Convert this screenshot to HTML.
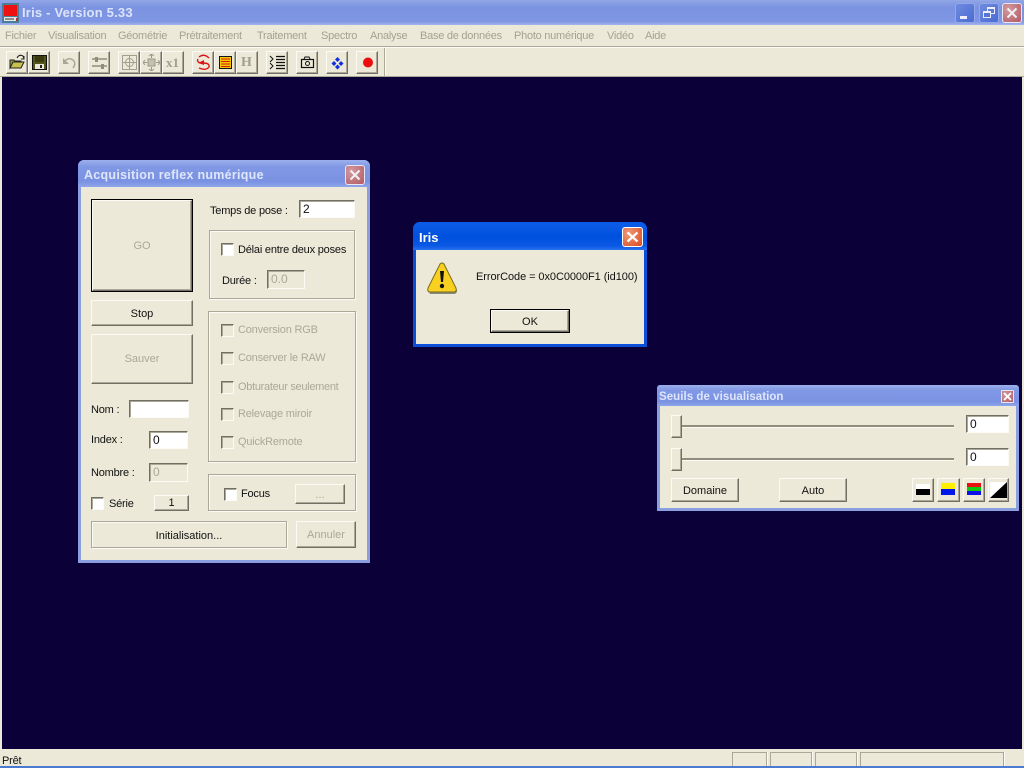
<!DOCTYPE html>
<html><head><meta charset="utf-8"><title>Iris</title>
<style>
html,body{margin:0;padding:0;width:1024px;height:768px;overflow:hidden;background:#0b0038}
*{box-sizing:border-box}
body{position:relative;font:11px/14px "Liberation Sans",sans-serif;color:#111}
div,svg,span.a{position:absolute}
.t{white-space:nowrap;line-height:14px;margin-top:1px;letter-spacing:-.2px}
.d{color:#aca899}
.btn{background:#ece9d8;border:1px solid;border-color:#fbfaf5 #716f64 #716f64 #fbfaf5;box-shadow:inset -1px -1px 0 #aca899;text-align:center;white-space:nowrap;padding-top:1px}
.ed{background:#fff;border:1px solid;border-color:#716f64 #fbfaf5 #fbfaf5 #716f64;padding:1px 0 0 3px;line-height:15px;box-shadow:inset 1px 1px 0 #aca899;font-size:12px}
.ed.dis{background:#ece9d8;color:#aca899}
.grp{border:1px solid #aca899;box-shadow:inset 1px 1px 0 #fbfaf5,1px 1px 0 #fbfaf5}
.ck{width:13px;height:13px;background:#fff;border:1px solid;border-color:#716f64 #fbfaf5 #fbfaf5 #716f64;box-shadow:inset 1px 1px 0 #aca899}
.ck.dis{background:#ece9d8}
.tb{width:22px;height:23px;top:51px;background:#ece9d8;border:1px solid;border-color:#fbfaf5 #716f64 #716f64 #fbfaf5;box-shadow:inset -1px -1px 0 #aca899}
.tb svg{left:2px;top:2px}
.win{background:#ece9d8;border:3px solid #8a9fe0;border-top:0;border-radius:6px 6px 0 0}
.cap{background:linear-gradient(#9db0ec,#8098e4 25%,#7a92e2 80%,#90a6ea);border-radius:6px 6px 0 0;color:#dfe6fa;font-weight:bold;white-space:nowrap}
.x{border-radius:3px;border:1px solid #e8e8f4;background:radial-gradient(circle at 30% 30%,#d29a9e,#b25a64)}
.m{top:28px;color:#a5a293;white-space:nowrap;line-height:14px;margin-top:1px;letter-spacing:-.25px}
</style></head><body>

<!-- desktop edges -->
<div style="left:0;top:77px;width:2px;height:672px;background:#ece9d8"></div>
<div style="left:1022px;top:77px;width:2px;height:672px;background:#ece9d8"></div>

<!-- main title bar -->
<div style="left:0;top:0;width:1024px;height:25px;background:linear-gradient(#90a6e6,#7b93e2 30%,#7e96e3 85%,#a2b4ee)"></div>
<svg style="left:2px;top:3px" width="18" height="20" viewBox="0 0 18 20"><rect x="0" y="0" width="17" height="20" fill="#4a7f9a"/><rect x="2" y="2" width="13" height="11" fill="#ee1111"/><rect x="2" y="14" width="13" height="4" fill="#e6e6e6"/><rect x="3" y="15.500" width="9" height="1" fill="#333"/><rect x="14" y="15" width="2" height="3" fill="#b03030"/></svg>
<div style="left:22px;top:5px;white-space:nowrap;font:bold 13px/16px 'Liberation Sans',sans-serif;letter-spacing:.2px;color:#dce4fa">Iris - Version 5.33</div>
<div style="left:955px;top:3px;width:20px;height:20px;border-radius:3px;background:linear-gradient(135deg,#6f8ce0,#4a6ad2);border:1px solid #94a8e8"><div style="left:4px;top:12px;width:7px;height:3px;background:#eef"></div></div>
<div style="left:979px;top:3px;width:20px;height:20px;border-radius:3px;background:linear-gradient(135deg,#6f8ce0,#4a6ad2);border:1px solid #94a8e8"><div style="left:7px;top:3px;width:8px;height:7px;border:1px solid #eef;border-top-width:2px"></div><div style="left:3px;top:7px;width:8px;height:7px;border:1px solid #eef;border-top-width:2px;background:#5476da"></div></div>
<div class="x" style="left:1002px;top:3px;width:20px;height:20px"><svg style="left:3px;top:3px" width="12" height="12"><path d="M1.500 1.500L10.500 10.500M10.500 1.500L1.500 10.500" stroke="#f2f2f6" stroke-width="2"/></svg></div>

<!-- menu -->
<div style="left:0;top:25px;width:1024px;height:21px;background:#ece9d8"></div>
<div class="m" style="left:5px">Fichier</div>
<div class="m" style="left:48px">Visualisation</div>
<div class="m" style="left:118px">Géométrie</div>
<div class="m" style="left:179px">Prétraitement</div>
<div class="m" style="left:257px">Traitement</div>
<div class="m" style="left:321px">Spectro</div>
<div class="m" style="left:370px">Analyse</div>
<div class="m" style="left:420px">Base de données</div>
<div class="m" style="left:514px">Photo numérique</div>
<div class="m" style="left:607px">Vidéo</div>
<div class="m" style="left:645px">Aide</div>

<!-- toolbar -->
<div style="left:0;top:46px;width:1024px;height:31px;background:#ece9d8;border-top:1px solid #aca899;box-shadow:inset 0 1px 0 #fbfaf5;border-bottom:1px solid #aca899"></div>
<div style="left:384px;top:48px;width:2px;height:28px;background:#aca899;border-right:1px solid #fbfaf5"></div>
<div class="tb" style="left:6px"><svg width="17" height="17" viewBox="0 0 17 17"><path d="M1 14V6h4l1 1h6v2H4L1 14z" fill="#9a9a30" stroke="#222"/><path d="M1 14h11l3-6H4z" fill="#c8c050" stroke="#222"/><path d="M8 4Q10 0 14 2l1 3M15 2v3h-3" fill="none" stroke="#222"/></svg></div>
<div class="tb" style="left:28px"><svg width="17" height="17" viewBox="0 0 17 17"><rect x="1.500" y="1.500" width="14" height="14" fill="#55551a" stroke="#111"/><rect x="4" y="2" width="9" height="6" fill="#3a3a10"/><rect x="4" y="10" width="9" height="5" fill="#e8e8d8"/><rect x="9" y="11" width="2" height="3" fill="#222"/></svg></div>
<div class="tb" style="left:58px"><svg width="17" height="17" viewBox="0 0 17 17"><path d="M3 8Q8 2 13 7Q15 10 12 14" fill="none" stroke="#aca899" stroke-width="1.500"/><path d="M2 4v6h6z" fill="#aca899"/></svg></div>
<div class="tb" style="left:88px"><svg width="17" height="17" viewBox="0 0 17 17"><path d="M1 5h15M1 12h15" stroke="#8f8d80" stroke-width="1.500"/><rect x="4" y="3" width="3" height="5" fill="#8f8d80"/><rect x="10" y="10" width="3" height="5" fill="#8f8d80"/></svg></div>
<div class="tb" style="left:118px"><svg width="17" height="17" viewBox="0 0 17 17"><rect x="1.500" y="1.500" width="14" height="14" fill="none" stroke="#a29f90"/><circle cx="8.500" cy="8.500" r="4" fill="none" stroke="#a29f90"/><path d="M8.500 2v13M2 8.500h13" stroke="#a29f90"/></svg></div>
<div class="tb" style="left:140px"><svg width="17" height="17" viewBox="0 0 17 17"><rect x="5" y="5" width="7" height="7" fill="#c4c1b0" stroke="#99968a"/><path d="M8.500 0v4M8.500 13v4M0 8.500h4M13 8.500h4M6 2l2.500-2 2.500 2M6 15l2.500 2 2.500-2M2 6L0 8.500 2 11M15 6l2 2.500-2 2.500" fill="none" stroke="#99968a"/></svg></div>
<div class="tb" style="left:162px"><div style="left:3px;top:3px;white-space:nowrap;font:bold 13px/15px 'Liberation Serif',serif;color:#a29f90">x1</div></div>
<div class="tb" style="left:192px"><svg width="17" height="17" viewBox="0 0 17 17"><path d="M14 4Q9-1 4 3M3 5Q1 9 8 9t6 4Q11 17 4 14" fill="none" stroke="#dc1414" stroke-width="1.400"/><path d="M3 9l6-3v5z" fill="#dc1414"/></svg></div>
<div class="tb" style="left:214px"><svg width="17" height="17" viewBox="0 0 17 17"><rect x="2.500" y="2.500" width="12" height="12" fill="#f5c800" stroke="#111"/><path d="M4 5h9M4 7.500h9M4 10h9M4 12.500h9" stroke="#d21a10"/></svg></div>
<div class="tb" style="left:236px"><div style="left:4px;top:3px;white-space:nowrap;font:bold 14px/15px 'Liberation Serif',serif;color:#a29f90">H</div></div>
<div class="tb" style="left:266px"><svg width="17" height="17" viewBox="0 0 17 17"><path d="M7 2.500h9M7 5.500h9M7 8.500h9M7 11.500h9M7 14.500h9" stroke="#111" stroke-width="1.300"/><path d="M1 2l3 3-3 3M1 9l3 3-3 3" fill="none" stroke="#111"/></svg></div>
<div class="tb" style="left:296px"><svg width="17" height="17" viewBox="0 0 17 17"><rect x="2.500" y="5.500" width="12" height="8" fill="none" stroke="#111" stroke-width="1.200"/><path d="M5 5l1-2h4l1 2" fill="none" stroke="#111"/><circle cx="8.500" cy="9.500" r="2" fill="none" stroke="#111"/></svg></div>
<div class="tb" style="left:326px"><svg width="17" height="17" viewBox="0 0 17 17"><path d="M8.500 3l2.500 2.500-2.500 2.500L6 5.500zM5 7l2.500 2.500L5 12 2.500 9.500zM12 7l2.500 2.500L12 12 9.500 9.500zM8.500 10.500L11 13l-2.500 2.500L6 13z" fill="#1030e0"/><circle cx="8.500" cy="9.200" r="1" fill="#fff"/></svg></div>
<div class="tb" style="left:356px"><svg width="17" height="17" viewBox="0 0 17 17"><circle cx="9" cy="8.500" r="5" fill="#ec0d0d"/></svg></div>

<!-- status bar -->
<div style="left:0;top:749px;width:1024px;height:17px;background:#ece9d8"></div>
<div style="left:0;top:766px;width:1024px;height:2px;background:#4a7bd0"></div>
<div class="t" style="left:2px;top:753px">Prêt</div>
<div style="left:732px;top:752px;width:35px;height:14px;border:1px solid #aca899;border-bottom:0;box-shadow:1px 0 0 #fbfaf5"></div>
<div style="left:770px;top:752px;width:42px;height:14px;border:1px solid #aca899;border-bottom:0;box-shadow:1px 0 0 #fbfaf5"></div>
<div style="left:815px;top:752px;width:42px;height:14px;border:1px solid #aca899;border-bottom:0;box-shadow:1px 0 0 #fbfaf5"></div>
<div style="left:860px;top:752px;width:144px;height:14px;border:1px solid #aca899;border-bottom:0;box-shadow:1px 0 0 #fbfaf5"></div>

<!-- Acquisition window -->
<div class="win" style="left:78px;top:160px;width:292px;height:403px"></div>
<div class="cap" style="left:78px;top:160px;width:292px;height:27px;padding:8px 0 0 6px;font-size:12.500px;line-height:15px;letter-spacing:.27px">Acquisition reflex numérique</div>
<div class="x" style="left:345px;top:165px;width:20px;height:20px"><svg style="left:3px;top:3px" width="12" height="12"><path d="M1.500 1.500L10.500 10.500M10.500 1.500L1.500 10.500" stroke="#f2f2f6" stroke-width="2"/></svg></div>

<div style="left:91px;top:199px;width:102px;height:93px;border:1px solid #000;background:#ece9d8"><div class="btn d" style="left:0;top:0;width:100px;height:91px;line-height:89px">GO</div></div>
<div class="btn" style="left:91px;top:300px;width:102px;height:26px;line-height:24px">Stop</div>
<div class="btn d" style="left:91px;top:334px;width:102px;height:50px;line-height:46px">Sauver</div>
<div class="t" style="left:210px;top:203px">Temps de pose :</div>
<div class="ed" style="left:299px;top:200px;width:56px;height:18px">2</div>

<div class="grp" style="left:209px;top:230px;width:146px;height:69px"></div>
<div class="ck" style="left:221px;top:243px"></div>
<div class="t" style="left:238px;top:242px">Délai entre deux poses</div>
<div class="t" style="left:222px;top:273px">Durée :</div>
<div class="ed dis" style="left:267px;top:270px;width:38px;height:19px">0.0</div>

<div class="grp" style="left:208px;top:311px;width:148px;height:151px"></div>
<div class="ck dis" style="left:221px;top:324px"></div><div class="t d" style="left:238px;top:322px">Conversion RGB</div>
<div class="ck dis" style="left:221px;top:352px"></div><div class="t d" style="left:238px;top:350px">Conserver le RAW</div>
<div class="ck dis" style="left:221px;top:381px"></div><div class="t d" style="left:238px;top:379px;letter-spacing:-.3px">Obturateur seulement</div>
<div class="ck dis" style="left:221px;top:408px"></div><div class="t d" style="left:238px;top:406px">Relevage miroir</div>
<div class="ck dis" style="left:221px;top:436px"></div><div class="t d" style="left:238px;top:434px">QuickRemote</div>

<div class="t" style="left:91px;top:402px">Nom :</div>
<div class="ed" style="left:129px;top:400px;width:60px;height:18px"></div>
<div class="t" style="left:91px;top:432px">Index :</div>
<div class="ed" style="left:149px;top:431px;width:39px;height:18px">0</div>
<div class="t" style="left:91px;top:465px">Nombre :</div>
<div class="ed dis" style="left:149px;top:463px;width:39px;height:19px">0</div>
<div class="ck" style="left:91px;top:497px"></div>
<div class="t" style="left:109px;top:496px">Série</div>
<div class="btn" style="left:154px;top:495px;width:35px;height:16px;line-height:13px">1</div>

<div class="grp" style="left:208px;top:474px;width:148px;height:37px"></div>
<div class="ck" style="left:224px;top:488px"></div>
<div class="t" style="left:241px;top:486px">Focus</div>
<div class="btn d" style="left:295px;top:484px;width:50px;height:20px;line-height:18px">...</div>

<div class="grp" style="left:91px;top:521px;width:196px;height:27px;text-align:center;line-height:26px;padding-top:1px">Initialisation...</div>
<div class="btn d" style="left:296px;top:521px;width:60px;height:27px;line-height:25px">Annuler</div>

<!-- Iris dialog -->
<div style="left:413px;top:222px;width:234px;height:125px;background:#ece9d8;border:3px solid #0a50d8;border-top:0;border-radius:7px 7px 0 0"></div>
<div style="left:413px;top:222px;width:234px;height:28px;border-radius:7px 7px 0 0;background:linear-gradient(#0a5ce8,#0a5ae6 15%,#0050de 55%,#0a58e4 85%,#2a72ee);color:#fff;font:bold 13px/16px 'Liberation Sans',sans-serif;padding:8px 0 0 6px">Iris</div>
<div style="left:622px;top:227px;width:21px;height:20px;border-radius:3px;border:1px solid #fff;background:radial-gradient(circle at 30% 30%,#f09a78,#d84a20)"><svg style="left:3px;top:3px" width="13" height="12"><path d="M1.500 1.500L11.500 10.500M11.500 1.500L1.500 10.500" stroke="#fff" stroke-width="2.200"/></svg></div>
<svg style="left:425px;top:261px" width="34" height="34" viewBox="0 0 34 34"><path d="M4 31h26l2-2v2l-2 2H5z" fill="#8a8a80"/><path d="M15 3Q17 1 19 3L31 27Q32 31 29 31H5Q2 31 3 27z" fill="#f8d020" stroke="#7a6a18" stroke-width="1"/><path d="M15 10h4l-1 11h-2z" fill="#111"/><circle cx="17" cy="25" r="2.200" fill="#111"/></svg>
<div class="t" style="left:476px;top:269px;letter-spacing:-.07px">ErrorCode = 0x0C0000F1 (id100)</div>
<div style="left:490px;top:309px;width:80px;height:24px;border:1px solid #000"><div class="btn" style="left:0;top:0;width:78px;height:22px;line-height:20px">OK</div></div>

<!-- Seuils -->
<div class="win" style="left:657px;top:385px;width:362px;height:126px"></div>
<div class="cap" style="left:657px;top:385px;width:362px;height:21px;padding:5px 0 0 2px;font-size:11.500px;line-height:14px;letter-spacing:.05px;border-radius:3px 3px 0 0">Seuils de visualisation</div>
<div class="x" style="left:1001px;top:390px;width:13px;height:13px;border-radius:1px"><svg style="left:1px;top:1px" width="9" height="9"><path d="M1 1L8 8M8 1L1 8" stroke="#fff" stroke-width="1.800"/></svg></div>

<div style="left:672px;top:425px;width:282px;height:2px;background:#8f8d7c;box-shadow:0 1px 0 #fbfaf5"></div>
<div class="btn" style="left:671px;top:415px;width:11px;height:23px"></div>
<div class="ed" style="left:966px;top:415px;width:43px;height:18px">0</div>
<div style="left:672px;top:458px;width:282px;height:2px;background:#8f8d7c;box-shadow:0 1px 0 #fbfaf5"></div>
<div class="btn" style="left:671px;top:448px;width:11px;height:23px"></div>
<div class="ed" style="left:966px;top:448px;width:43px;height:18px">0</div>

<div class="btn" style="left:671px;top:478px;width:68px;height:24px;line-height:22px">Domaine</div>
<div class="btn" style="left:779px;top:478px;width:68px;height:24px;line-height:22px">Auto</div>
<div class="btn" style="left:912px;top:478px;width:22px;height:24px"><div style="left:3px;top:5px;width:14px;height:6px;background:#fff"></div><div style="left:3px;top:10px;width:14px;height:6px;background:#000"></div></div>
<div class="btn" style="left:937px;top:478px;width:23px;height:24px"><div style="left:3px;top:4px;width:14px;height:6px;background:#ffee00"></div><div style="left:3px;top:10px;width:14px;height:6px;background:#0018e8"></div></div>
<div class="btn" style="left:963px;top:478px;width:22px;height:24px"><div style="left:3px;top:4px;width:14px;height:4px;background:#e81010"></div><div style="left:3px;top:8px;width:14px;height:4px;background:#10c810"></div><div style="left:3px;top:12px;width:14px;height:4px;background:#1010e8"></div></div>
<div class="btn" style="left:988px;top:478px;width:21px;height:24px"><svg style="left:1px;top:3px" width="17" height="16"><rect width="17" height="16" fill="#fff"/><path d="M17 0V16H0z" fill="#000"/></svg></div>

</body></html>
